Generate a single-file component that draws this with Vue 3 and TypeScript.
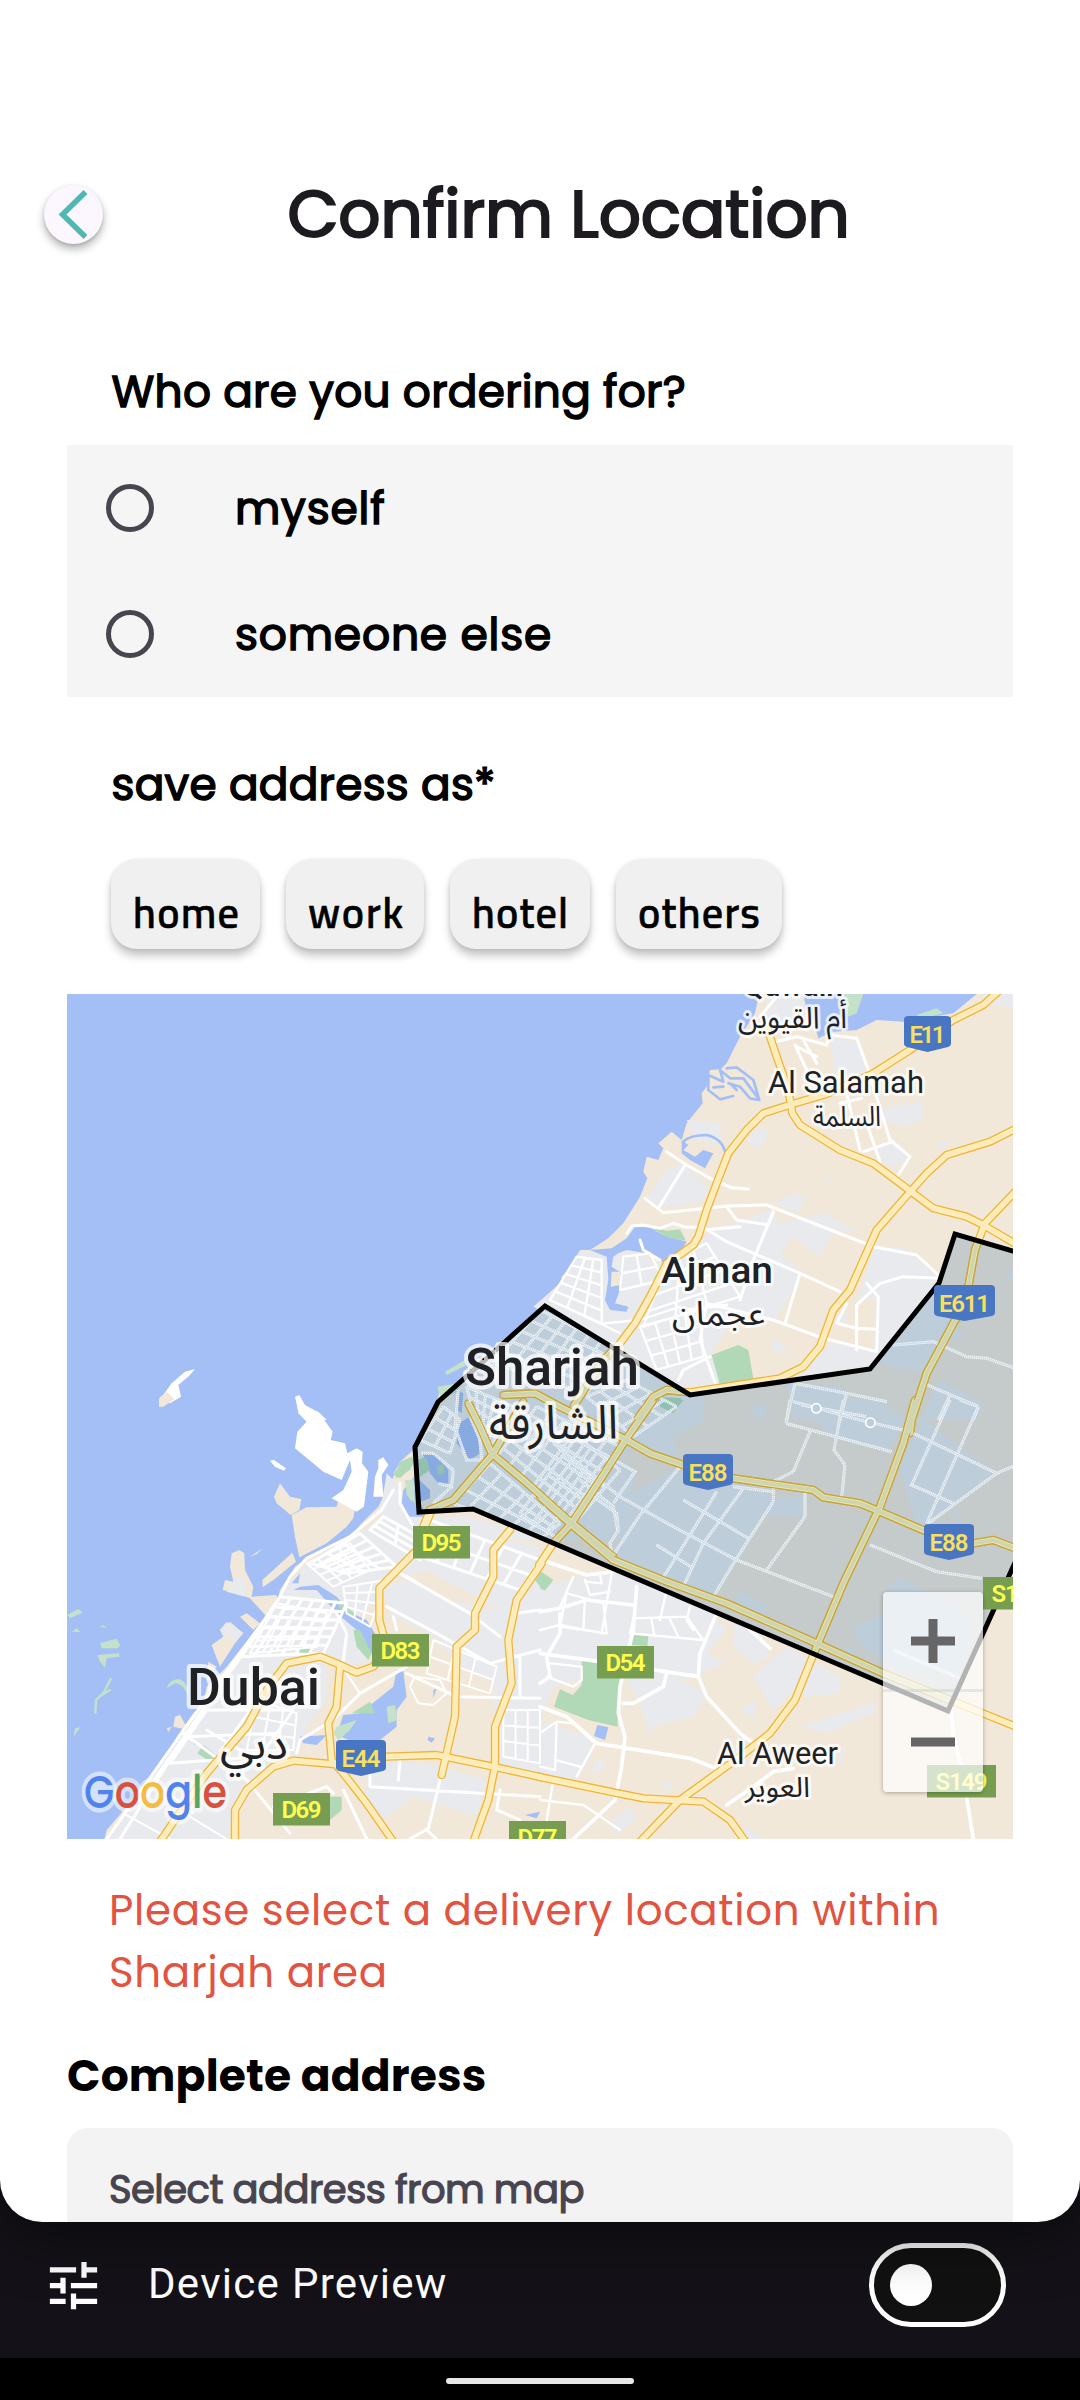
<script setup lang="ts">
import { ref } from 'vue'

type Point = [number, number]

const recipients = ['myself', 'someone else']
const recipient = ref('')
const tags = [
  { name: 'home', width: 149, text: 106 },
  { name: 'work', width: 138, text: 95 },
  { name: 'hotel', width: 140, text: 96 },
  { name: 'others', width: 166, text: 122 },
]
const previewOn = ref(false)

/* Street mesh between four corners: n lines one way, m lines the other. */
function mesh(a: Point, b: Point, c: Point, d: Point, n: number, m: number): string {
  const mix = (p: Point, q: Point, t: number): Point => [p[0] + (q[0] - p[0]) * t, p[1] + (q[1] - p[1]) * t]
  const seg = (p: Point, q: Point) => `M${p[0].toFixed(1)},${p[1].toFixed(1)}L${q[0].toFixed(1)},${q[1].toFixed(1)}`
  let out = ''
  for (let i = 0; i <= n; i++) out += seg(mix(a, b, i / n), mix(d, c, i / n))
  for (let j = 0; j <= m; j++) out += seg(mix(a, d, j / m), mix(b, c, j / m))
  return out
}

/* Map tiles, each at three units per pixel. */
const NW = 'translate(60 990) scale(.33333)'
const NE = 'translate(540 990) scale(.33333)'
const MID = 'translate(380 1240) scale(.33333)'
const SW = 'translate(60 1400) scale(.33333)'
const SE = 'translate(540 1400) scale(.33333)'

interface Shape { at: string; fill: string; d: string }
const sand = '#f1e8d9'
const urban = '#e8eaed'
const water = '#a4bff5'
const park = '#b1d9b8'
const pale = '#c4e2c9'

const shapes: Shape[] = [
  { at: NE, fill: sand, d: 'M660,0L645,70 600,140 560,220 542,238 510,240 500,290 485,310 488,340 440,400 425,450 395,425 355,460 370,475 355,510 320,500 310,545 322,565 300,620 250,700 205,745 150,780 125,780 100,825 65,860 65,880 20,940 -60,1010 -60,1300 1440,1300 1440,0Z' },
  { at: MID, fill: sand, d: 'M500,190L450,240 380,290 330,330 270,375 250,400 240,430 180,440 175,470 165,510 110,610 95,650 60,670 40,700 70,740 0,790 0,910 1030,910 1030,160 520,160Z' },
  { at: SW, fill: sand, d: 'M1440,0L1180,0 1060,150 1020,185 1003,225 985,260 955,320 905,370 860,420 790,455 740,475 705,500 660,570 650,610 615,655 580,700 540,750 500,800 440,860 430,910 400,940 350,1010 330,1060 290,1100 240,1170 200,1220 140,1290 130,1330 1450,1330 1450,0Z' },
  { at: SE, fill: sand, d: 'M-5,-5H1440V1330H-5Z' },
  { at: SW, fill: sand, d: 'M660,250L690,290 724,297 718,330 692,345 650,310 642,290ZM695,345L740,322 830,320 835,302 884,330 880,355 860,380 800,430 718,472 705,410ZM607,540L697,458 708,485 640,540 608,562ZM515,460L538,450 553,460 555,510 580,560 575,590 650,585 660,650 620,650 570,595 530,580 488,570 495,540 520,545 510,500ZM480,690L510,665 550,700 525,730 480,800 455,735 490,710ZM540,650L560,640 600,670 580,690ZM570,470L608,445 590,462ZM345,950L360,945 385,990 340,980ZM320,985L335,980 325,995ZM445,785L470,800 440,850Z' },
  { at: NE, fill: urban, d: 'M690,0L780,12 800,60 760,110 700,110 660,110ZM1320,12L1440,12 1440,55 1365,45ZM440,390L540,400 545,460 470,455ZM655,415L690,420 655,480 620,450ZM380,540L430,520 510,600 480,640 355,650 320,620ZM1040,350L1150,335 1150,390 1080,410 1030,390ZM870,140L960,160 975,250 890,280ZM1000,470L1080,460 1110,500 1060,530 1010,510ZM705,640L760,608 800,625 770,670ZM850,555L885,580 850,570ZM1190,460L1230,450 1205,480ZM120,780L220,800 270,780 360,820 470,760 520,720 690,660 720,700 850,670 960,730 890,720 860,760 840,800 760,740 720,790 790,850 740,930 700,1000 600,960 560,1020 510,1090 540,1180 430,1190 250,1090 -20,950 60,880ZM1000,780L1090,770 1190,860 1180,900 1070,1030 990,1130 760,1165 830,1100 870,1060 1000,1080 1010,920 950,940ZM690,1040L750,1080 700,1090ZM870,980L930,970 900,1010Z' },
  { at: MID, fill: urban, d: 'M500,190L700,300 940,460 860,500 900,550 880,600 900,650 760,620 720,660 770,710 690,900 500,900 290,800 150,790 110,690 110,610 190,490 300,370ZM20,700L70,750 60,800 100,830 260,830 500,900 0,900 0,820Z' },
  { at: SW, fill: urban, d: 'M980,240L1020,250 1025,290 1080,370 1440,440 1440,1130 1310,1100 1300,840 1200,800 1120,710 1000,650 960,560 1050,540 1230,640 1300,690 1320,630 1100,510 1020,530 930,620 880,660 930,780 860,800 790,750 800,660 800,900 740,980 720,1050 640,1080 580,1180 520,1240 500,1317 140,1317 400,950 500,830 620,650 670,570 730,500 900,400 970,350ZM530,530L558,535 555,590 500,575ZM500,665L550,700 515,725 480,690ZM920,1080L1100,1090 1280,1140 1250,1250 1100,1200 920,1170ZM880,1180L1010,1150 1050,1200 950,1270ZM1180,600L1380,650 1400,800 1250,720Z' },
  { at: SE, fill: urban, d: 'M-5,560L120,530 240,510 500,630 560,690 500,760 560,790 480,820 420,840 500,880 460,950 340,980 330,1010 300,910 240,800 40,860 0,960 140,1010 160,1060 110,1140 0,1120ZM580,670L660,700 690,770 640,790 580,740ZM640,830L740,740 900,830 900,880 800,890 770,860 700,930ZM600,930L650,900 640,960ZM780,980L1010,905 1000,940 860,1000ZM150,1110L180,1075 200,1100 170,1120ZM220,1260L270,1220 290,1260 220,1310ZM620,1280L670,1317 610,1317ZM365,1150L395,1145 390,1180ZM900,1040L920,1040 890,1110Z' },
  { at: SE, fill: urban, d: 'M300,-10L490,-10 490,60 400,110 300,90ZM640,20L680,15 670,55 635,45ZM400,210L560,230 700,290 620,440 520,590 220,480 240,300ZM620,340L720,290 790,290 790,350ZM760,0L1010,0 1100,60 1040,150 880,110ZM1150,60L1370,220 1250,310 1130,380 1080,200ZM1060,540L1120,550 1090,600ZM590,570L680,620 670,650 600,640ZM940,680L1040,640 1040,560 1080,530 1240,620 1300,660 1260,830 1060,800 950,720ZM1240,330L1270,340 1240,360ZM910,750L950,740 930,790Z' },
  { at: NE, fill: urban, d: 'M1060,1040L1170,860 1240,1000 1170,1150 1060,1130 1000,1110ZM1240,1010L1275,1040 1240,1050ZM740,1180L900,1190 1000,1290 760,1290ZM1390,860L1440,820 1440,870ZM1200,1170L1330,1240 1310,1290 1140,1290Z' },
  { at: NE, fill: water, d: 'M790,12L1310,12 1240,70 1090,95 1010,90 950,120 880,125 835,145 820,90 800,60ZM425,450L445,465 430,480 465,500 490,480 520,490 495,535 450,510 425,490ZM150,780L215,775 260,745 285,710 330,712 370,735 440,755 420,790 375,820 320,790 260,780 235,790 220,800 215,830 245,850 240,900 225,940 265,950 260,965 210,960 195,930 205,870 200,800Z' },
  { at: NE, fill: sand, d: 'M215,845L240,845 242,885 212,890Z' },
  { at: NE, fill: pale, d: 'M895,0L970,12 950,70 925,80 910,30ZM1130,75L1190,55 1210,70 1150,85Z' },
  { at: NE, fill: park, d: 'M335,712L380,722 420,718 438,752 380,742ZM515,1095L595,1065 625,1080 640,1165 540,1185ZM350,1220L425,1225 400,1270 360,1250Z' },
  { at: MID, fill: water, d: 'M235,550L270,530 290,570 300,640 270,660 230,610ZM125,640L170,645 205,690 205,730 180,735 150,700 140,660ZM118,720L150,750 150,775 120,785ZM232,450L250,460 245,520 232,510ZM70,750L110,700 112,820 85,830 65,790Z' },
  { at: MID, fill: park, d: 'M40,700L95,650 105,660 90,690 50,715ZM115,660L135,650 150,690 120,710ZM170,680L190,670 195,700 175,705Z' },
  { at: MID, fill: pale, d: 'M195,395L255,360 260,375 200,405ZM172,440L240,430 230,460 180,470ZM75,720L100,720 112,780 100,795 80,760Z' },
  { at: SW, fill: '#fff', d: 'M710,0L725,0 740,30 775,35 818,95 812,120 855,130 862,160 890,145 908,155 906,190 925,215 912,320 890,335 815,295 850,270 875,215 870,180 845,240 790,215 705,145 712,95 740,65 715,40ZM630,182L642,180 678,205 672,212 645,200ZM955,180L970,172 985,195 965,225 970,290 940,290 945,230 955,205Z' },
  { at: NW, fill: '#fff', d: 'M310,1215L335,1180 375,1145 405,1137 388,1157 355,1185 363,1220 330,1240ZM705,1220L718,1215 735,1245 780,1270 800,1290 740,1290 735,1270 715,1265Z' },
  { at: NW, fill: sand, d: 'M297,1225L320,1205 343,1228 310,1250 297,1250Z' },
  { at: SW, fill: water, d: 'M720,560L775,555 830,590 875,640 920,660 945,700 940,760 920,760 890,690 830,640 770,570 700,570ZM695,550L720,520 715,550ZM1010,810L1030,815 1040,890 1010,930 1010,980 960,1020 880,1025 830,1005 850,945 900,940 950,900 1000,860ZM720,1010L800,1005 770,1035 730,1030ZM1105,1010L1125,1015 1115,1028 1103,1020ZM1395,1245L1440,1235 1430,1255ZM1120,870L1130,865 1120,895ZM385,1005L410,1025 405,1035ZM1050,350L1060,260 1100,350Z' },
  { at: SW, fill: park, d: 'M880,690L900,690 935,760 925,780 890,740ZM720,740L760,750 730,785 718,760ZM815,590L885,640 880,655 840,625ZM430,1035L480,1075 450,1085 412,1060ZM810,1190L845,1190 845,1230 810,1260ZM1425,540L1440,520 1440,560ZM875,940L930,905 945,940ZM1005,225L1020,185 1055,170 1040,215 1020,235Z' },
  { at: SW, fill: pale, d: 'M820,1000L830,980 890,960 870,990 835,1020ZM980,920L1005,915 1012,960 985,970ZM22,645L55,627 68,638 30,654ZM35,695L50,685 62,697ZM118,680L130,676 142,684ZM120,730L170,716 180,735 175,745 125,745ZM112,765L178,760 178,770 140,775 135,803 120,785ZM40,1010L45,985 62,982ZM320,865Q330,835 360,838Q385,850 385,890Q370,850 345,850ZM1040,250L1060,235 1065,310 1040,285Z' },
  { at: SE, fill: park, d: 'M125,780L175,785 240,830 232,980 145,960 42,920 60,868 98,885 125,855ZM278,700L325,708 322,738 275,735ZM0,512L40,540 15,572 0,565ZM350,0L430,0 400,38Z' },
  { at: SE, fill: water, d: 'M172,975L205,982 195,1020 162,1008Z' },
]

/* Plain white streets outside of the delivery zone. */
const streets = [
  { at: NE, w: 9, d: 'M705,155L770,140 860,165 870,135 950,145 985,240 1050,450 1110,500 1075,555M765,165L800,240M790,150L830,220M770,170L790,180 830,200M710,20L660,80M920,310L960,480M980,400L1020,515M970,485L1060,455M900,340L965,325M380,485L440,525 520,570 575,593 625,597M432,530L355,655M315,625L370,668 560,648 680,645 1000,770 1130,795 1200,860M260,730L275,708 310,705 360,715 400,700 440,712 490,712 560,755 780,850 900,905M560,650L590,690 685,705 700,665 640,810 600,930M300,750L310,780 360,810M780,850L735,1000M490,720L600,710M500,940L700,990 850,1045 1010,1085 1015,920 980,880M1200,865L1090,860 1020,880 950,945 950,1080M890,1000L950,1015 1010,1018M890,1000L920,940M500,940L480,1050 530,1190M430,960L560,945M415,1170L430,1140 510,1100' },
  { at: NE, w: 7, d: mesh([110, 800], [185, 810], [185, 1000], [30, 930], 3, 5) + mesh([250, 800], [330, 790], [370, 870], [240, 900], 2, 2) + mesh([380, 820], [500, 760], [600, 920], [310, 1010], 3, 4) + mesh([300, 1010], [480, 960], [490, 1100], [350, 1140], 4, 3) + 'M30,930L180,1000 240,1030M190,1000L300,990 420,950' },
  { at: SW, w: 9, d: mesh([900, 400], [1010, 500], [860, 520], [750, 490], 5, 3) + mesh([660, 590], [860, 610], [790, 760], [540, 770], 6, 6) + mesh([1110, 360], [1440, 480], [1380, 570], [1080, 470], 6, 2) + mesh([440, 930], [700, 930], [600, 1070], [330, 1090], 2, 2) + mesh([970, 350], [1060, 400], [1080, 480], [930, 390], 2, 3) + 'M1000,270L965,330 870,410 740,475 690,530 660,590 620,650 510,800 400,950 140,1317M1020,250L1020,310 1060,380M530,780L380,1000 180,1317M600,690L500,830 240,1200M980,620L1130,700 1290,790 1440,750M1040,820L1190,890 1440,895M1040,800L900,880 820,960 720,1020 710,1060M1060,540L1020,520 1230,640 1320,710M830,640L860,700 850,780M370,1000L560,1140 690,1300M930,1110L930,1160 1440,1190M820,1180L800,1160 640,1220M1020,1080L1015,1140M1145,1120L1105,1285 1050,1317M850,1170L920,1317M1100,1290L1130,1317M1320,1170L1310,1230 1380,1260M1440,630L1370,640M1000,650L1010,690M1380,770L1380,890M440,990L540,1050' },
  { at: SW, w: 6, d: mesh([740, 490], [870, 430], [930, 510], [820, 560], 4, 4) + mesh([850, 560], [980, 540], [930, 680], [860, 640], 3, 4) + mesh([650, 610], [800, 640], [770, 740], [570, 760], 5, 4) + mesh([1120, 720], [1310, 800], [1290, 880], [1100, 820], 3, 2) + mesh([590, 900], [710, 940], [700, 1050], [560, 1050], 3, 3) + mesh([1330, 930], [1440, 930], [1440, 1090], [1330, 1070], 3, 3) + 'M1065,830L1050,860 1075,910 1120,915 1160,880 1140,840ZM860,820L900,880M190,1240L330,1317M340,1220L500,1317M290,1150L400,1240' },
  { at: SE, w: 11, d: 'M0,635L60,625 140,600 280,615M530,640L480,760 475,830 500,890 600,1000 640,1030M290,560L280,690 240,860 235,940 255,1010 245,1100 225,1200 100,1317M0,760L180,785 475,830M0,920L80,950 170,1030 450,1075 540,1110M60,640L60,700 20,770 30,830 0,850M1230,910L1240,1000 1270,1130 1300,1317M560,1215L640,1160 700,1115 760,1105M620,680L690,745M20,485L140,525 220,515M380,820L370,860 280,910 250,910' },
  { at: SE, w: 7, d: mesh([60, 680], [200, 700], [190, 610], [80, 580], 2, 1) + mesh([280, 655], [440, 650], [490, 720], [270, 700], 3, 1) + 'M100,530L60,620M135,540L150,585 210,575M180,520L185,550 135,545M215,520L185,700M380,570L360,660M450,620L440,660 460,690M0,690L60,675 190,700M30,790L125,800 125,840 100,860 20,830M0,1000L50,965 100,970 165,1030 110,1130M50,970L45,1110 0,1100M0,1200L130,1215 240,1290M40,1140L20,1260M45,1080L120,1100' },
]

/* Streets seen through the zone's tint. */
const zoneStreets = [
  { at: NE, d: 'M1060,1065L1180,1055 1280,1100 1340,1105 1440,1140M740,1290L765,1180 920,1210 1040,1235M920,1210L900,1290M785,1245L980,1280M1150,1180L1315,1250 1300,1290M1230,1215L1195,1290' },
  { at: SE, d: 'M750,0L738,70 1055,155M760,5L960,60 1110,95 1370,220 1165,370M910,0L882,150 915,195 905,290M810,95L760,215 700,245M1230,0L1115,255 1240,310M1260,0L1315,20 1160,370M1440,190L1370,220M990,435L1190,515 1325,535M795,280L795,350 680,510M1060,750L1260,835' },
  { at: SE, d: 'M420,200L300,345 210,480M530,275L450,405 365,540M610,265L490,430 430,560M700,245L700,305 590,475 520,590M40,130L240,290 400,380 590,480 880,590M170,150L285,215 220,310M430,300L490,335 625,415M350,435L460,505M580,260L700,275M160,290L230,340 235,390 210,430 215,460' },
  { at: SE, d: mesh([110, 110], [240, 210], [60, 420], [-60, 340], 3, 4) },
  { at: MID, d: mesh([480, 210], [700, 320], [620, 460], [340, 370], 6, 5) + mesh([260, 440], [400, 500], [330, 620], [290, 560], 5, 4) + mesh([470, 500], [720, 620], [560, 840], [350, 650], 6, 6) + mesh([740, 420], [890, 500], [760, 590], [620, 470], 4, 3) + mesh([330, 670], [540, 850], [490, 890], [220, 790], 6, 3) + mesh([190, 500], [240, 540], [210, 640], [120, 600], 2, 3) + 'M235,450L225,560 260,660 305,660 300,600 270,530M125,640L160,640 220,690 215,740 175,730M215,740L160,790M600,720L700,800 715,880' },
]

interface Road { at: string; d: string }
const roads: Road[] = [
  { at: NE, d: 'M1380,0L1330,45 1240,90 1110,180 1000,250 860,312 755,343 670,370 620,420 565,490 530,580 500,660 475,740 460,765 425,790 380,820 330,920 285,1000 240,1060 190,1110 100,1250' },
  { at: NE, d: 'M680,110L710,200 745,300 757,370 780,405 900,480 1000,520 1100,595 1180,655 1280,680 1330,705 1440,770' },
  { at: NE, d: 'M1440,410L1350,455 1220,495 1160,550 1080,640 1010,720 970,810 930,900 880,960 840,1070 790,1130 720,1165 450,1207 380,1200 340,1220 290,1290' },
  { at: NE, d: 'M1440,590L1335,700 1305,780 1285,890 1265,960 1240,1000 1160,1150 1115,1290 1110,1330' },
  { at: SE, d: 'M-110,-15L-15,-20 60,20 260,120 330,160 430,195 580,235 820,270 850,292 960,310 1020,335 1160,395 1300,430 1360,420 1440,450' },
  { at: MID, d: 'M265,490L300,560 335,640 430,720 565,840 700,950' },
  { at: SE, d: 'M0,290L90,370 220,480 380,545 560,610 830,730 1030,820 1230,900 1440,985' },
  { at: MID, d: 'M430,485L340,640 220,780 150,810 130,860' },
  { at: SE, d: 'M340,0L260,115 180,240 95,370 40,430 -3,495' },
  { at: SE, d: 'M1125,0L1090,130 1020,320 910,550 830,740 765,900 690,1000 600,1070 420,1200 300,1325' },
  { at: SE, d: 'M-5,1130L225,1178 310,1195 490,1205 570,1260 620,1330' },
  { at: SW, d: 'M1115,330L1095,380 1080,440 958,565 958,660 980,740 940,800 890,818 830,790 780,770 680,790 620,870 560,980 440,1120 300,1325' },
  { at: SW, d: 'M840,800L830,920 805,970 815,1080 850,1120 920,1210 1000,1325' },
  { at: SW, d: 'M525,1325L525,1230 560,1170 640,1100 700,1082 850,1095 980,1070 1130,1065 1300,1100 1445,1132' },
  { at: SW, d: 'M1445,490L1370,600 1345,720 1355,850 1305,980 1305,1100 1285,1200 1240,1325' },
  { at: SW, d: 'M1350,390L1300,450 1300,530 1245,640 1245,690 1190,740 1185,950 1145,1125' },
]

const zone = '1013,1251 955,1234 939,1283 870,1369 690,1395 545,1306 438,1402 415,1447 419,1512 473,1509 948,1711 1013,1567'

const places = [
  { name: 'Quwain', x: 743, y: 996, w: 100, size: 31, weight: 500 },
  { name: 'أم القيوين', x: 738, y: 1028, w: 109, size: 30, weight: 400 },
  { name: 'Al Salamah', x: 768, y: 1093, w: 156, size: 31, weight: 400 },
  { name: 'السلمة', x: 813, y: 1126, w: 68, size: 28, weight: 400 },
  { name: 'Ajman', x: 661, y: 1283, w: 112, size: 37, weight: 500 },
  { name: 'عجمان', x: 672, y: 1325, w: 93, size: 33, weight: 400 },
  { name: 'Sharjah', x: 465, y: 1385, w: 174, size: 52, weight: 500 },
  { name: 'الشارقة', x: 489, y: 1439, w: 129, size: 47, weight: 400 },
  { name: 'Dubai', x: 187, y: 1705, w: 133, size: 52, weight: 500 },
  { name: 'دبي', x: 220, y: 1759, w: 68, size: 43, weight: 400 },
  { name: 'Al Aweer', x: 717, y: 1764, w: 121, size: 31, weight: 400 },
  { name: 'العوير', x: 745, y: 1797, w: 65, size: 28, weight: 400 },
]

const blueShields = [
  { name: 'E11', x: 904, y: 1016, w: 47, text: 36 },
  { name: 'E611', x: 934, y: 1285, w: 61, text: 51 },
  { name: 'E88', x: 683, y: 1454, w: 50, text: 39 },
  { name: 'E88', x: 924, y: 1524, w: 50, text: 39 },
  { name: 'E44', x: 336, y: 1740, w: 50, text: 39 },
]
const greenShields = [
  { name: 'D95', x: 413, y: 1526, w: 57, text: 40 },
  { name: 'D83', x: 372, y: 1634, w: 57, text: 40 },
  { name: 'D54', x: 597, y: 1646, w: 57, text: 40 },
  { name: 'D69', x: 273, y: 1793, w: 57, text: 40 },
  { name: 'D77', x: 509, y: 1821, w: 57, text: 40 },
  { name: 'S149', x: 927, y: 1765, w: 69, text: 52 },
  { name: 'S116', x: 983, y: 1577, w: 69, text: 52 },
]
const shieldPath = (x: number, y: number, w: number) =>
  `M${x + 4},${y}H${x + w - 4}Q${x + w},${y} ${x + w},${y + 4}V${y + 28}Q${x + w},${y + 30} ${x + w - 3},${y + 31}L${x + w / 2},${y + 36}L${x + 3},${y + 31}Q${x},${y + 30} ${x},${y + 28}V${y + 4}Q${x},${y} ${x + 4},${y}Z`
</script>

<template>
  <div class="device">
    <main class="sheet">
      <header class="top">
        <button class="back" aria-label="Back">
          <svg width="59" height="59" viewBox="0 0 59 59"><path d="M41.500 7 18.500 29.500 41.500 52" fill="none" stroke="#50b8b3" stroke-width="5.5" /></svg>
        </button>
        <h1>Confirm Location</h1>
      </header>

      <h2 class="question">Who are you ordering for?</h2>
      <div class="radios">
        <label v-for="r in recipients" :key="r" @click="recipient = r">
          <span class="ring" :class="{ on: recipient === r }"></span>
          <span :class="r === 'myself' ? 'me' : 'other'">{{ r }}</span>
        </label>
      </div>

      <h2 class="save">save address as*</h2>
      <div class="tags">
        <button v-for="t in tags" :key="t.name" :style="{ width: t.width + 'px' }">
          <svg :width="t.text" height="60" overflow="visible"><text x="0" y="48.5" :textLength="t.text">{{ t.name }}</text></svg>
        </button>
      </div>

      <div class="map">
        <svg width="946" height="845" viewBox="67 994 946 845">
          <path v-for="(s, i) in shapes" :key="'s' + i" :transform="s.at" :fill="s.fill" :d="s.d" />
          <g fill="none" stroke-linejoin="round" stroke-linecap="round">
            <path :transform="SW" d="M152,838L130,880 108,900 106,938M150,870L125,885" :stroke="pale" stroke-width="7" />
            <path :transform="NE" d="M430,455Q450,435 500,435Q545,445 555,485M540,240L570,265 610,265 655,325M560,235L590,232 640,270 658,330 630,325 600,290 565,280M540,240L550,275 505,255 505,300 540,328 580,318M520,292L550,290M570,280L590,300" :stroke="water" stroke-width="8" />
            <path v-for="(s, i) in streets" :key="'w' + i" :transform="s.at" :d="s.d" stroke="#fff" :stroke-width="s.w" />
            <path v-for="(r, i) in roads" :key="'o' + i" :transform="r.at" :d="r.d" stroke="#efb440" stroke-width="25" />
            <path v-for="(r, i) in roads" :key="'i' + i" :transform="r.at" :d="r.d" stroke="#fff6a8" stroke-width="17" />
            <path v-for="(r, i) in roads" :key="'c' + i" :transform="r.at" :d="r.d" stroke="#fdeabf" stroke-width="12" />
          </g>
          <clipPath id="zone-clip"><polygon :points="zone" /></clipPath>
          <polygon :points="zone" fill="rgba(20,90,145,.2)" />
          <g clip-path="url(#zone-clip)" fill="none">
            <path v-for="(s, i) in zoneStreets" :key="'z' + i" :transform="s.at" :d="s.d" stroke="#fff" stroke-width="9" stroke-dasharray="4 2" />
            <path v-for="(s, i) in zoneStreets" :key="'y' + i" :transform="s.at" :d="s.d" stroke="#d1dfe9" stroke-width="4" />
            <g :transform="SE" stroke="#fff" stroke-width="5"><circle cx="829" cy="25" r="14" fill="#becdda" /><circle cx="991" cy="68" r="14" fill="#becdda" /></g>
            <path v-for="(r, i) in roads" :key="'zo' + i" :transform="r.at" :d="r.d" stroke="#c6a53f" stroke-width="25" />
            <path v-for="(r, i) in roads" :key="'zi' + i" :transform="r.at" :d="r.d" stroke="#eee9a0" stroke-width="17" />
            <path v-for="(r, i) in roads" :key="'zc' + i" :transform="r.at" :d="r.d" stroke="#cfd4b2" stroke-width="12" />
          </g>
          <polygon :points="zone + ' 1030,1530 1030,1256'" fill="none" stroke="#000" stroke-width="5" />

          <g v-for="(s, i) in blueShields" :key="'b' + i">
            <path :d="shieldPath(s.x, s.y, s.w)" fill="#4876c2" />
            <text class="shield" :x="s.x + s.w / 2" :y="s.y + 27" :textLength="s.text" fill="#f7df62">{{ s.name }}</text>
          </g>
          <g v-for="(s, i) in greenShields" :key="'g' + i">
            <rect :x="s.x" :y="s.y" :width="s.w" height="32.5" fill="#779e50" />
            <text class="shield" :x="s.x + s.w / 2" :y="s.y + 25" :textLength="s.text" fill="#ffff52">{{ s.name }}</text>
          </g>
          <text
            v-for="p in places" :key="p.name" class="place" :x="p.x + p.w / 2" :y="p.y" :textLength="p.w"
            lengthAdjust="spacingAndGlyphs" :font-size="p.size" :font-weight="p.weight" :stroke-width="p.size > 40 ? 8 : 6"
          >{{ p.name }}</text>
          <text class="google" x="84" y="1808" textLength="143" lengthAdjust="spacingAndGlyphs"><tspan fill="#5083ed">G</tspan><tspan fill="#d75040">o</tspan><tspan fill="#f2bd42">o</tspan><tspan fill="#5083ed">g</tspan><tspan fill="#58a55c">l</tspan><tspan fill="#d75040">e</tspan></text>
        </svg>
        <div class="zoom">
          <button aria-label="Zoom in"><svg width="44" height="44" viewBox="0 0 44 44"><path d="M0 22H44M22 0V44" stroke="#666" stroke-width="9" /></svg></button>
          <button aria-label="Zoom out"><svg width="44" height="44" viewBox="0 0 44 44"><path d="M0 22H44" stroke="#666" stroke-width="9" /></svg></button>
        </div>
      </div>

      <p class="error">Please select a delivery location within<br />Sharjah area</p>
      <h2 class="complete">Complete address</h2>
      <div class="field"><span>Select address from map</span></div>
    </main>

    <footer class="preview">
      <svg class="tune" width="63" height="63" viewBox="0 0 24 24"><path fill="#fff" d="M3 17v2h6v-2H3zM3 5v2h10V5H3zm10 16v-2h8v-2h-8v-2h-2v6h2zM7 9v2H3v2h4v2h2V9H7zm14 4v-2H11v2h10zm-6-4h2V7h4V5h-4V3h-2v6z" /></svg>
      <span class="name">Device Preview</span>
      <button class="switch" :class="{ on: previewOn }" aria-label="Device Preview" @click="previewOn = !previewOn"><i></i></button>
    </footer>
    <div class="system"><span></span></div>
  </div>
</template>

<style>
body { margin: 0; background: #000; }
</style>

<style scoped>
.device { width: 1080px; height: 2400px; display: flex; flex-direction: column; overflow: hidden; background: #141218; font-family: Poppins, Inter, sans-serif; color: #000; }
button { border: 0; padding: 0; margin: 0; }
h1, h2, p { margin: 0; white-space: nowrap; }
h2 { font-size: 43.8px; font-weight: 400; line-height: 60px; letter-spacing: .3px; -webkit-text-stroke: 1.5px #000; }
.sheet { position: relative; z-index: 1; box-sizing: border-box; height: 2221.500px; flex: none; overflow: hidden; background: #fff; border-radius: 0 0 42px 42px; box-shadow: 0 10px 60px rgba(0, 0, 0, .55); padding: 164px 67px 0; display: flex; flex-direction: column; align-items: stretch; }
.sheet > * { flex: none; }
.top { display: flex; align-items: center; height: 100px; margin-left: -23px; }
.back { width: 59px; height: 59px; border-radius: 50%; background: #fcf7ff; box-shadow: 0 5px 9px rgba(0, 0, 0, .3), 0 1px 3px rgba(0, 0, 0, .12); }
.back svg { display: block; }
h1 { margin: 0 0 0 184.5px; font-size: 66px; font-weight: 400; line-height: 100px; letter-spacing: -.1px; color: #1d1b20; -webkit-text-stroke: 2.2px #1d1b20; }
.question { margin: 98px 0 0 44.5px; }
.radios { margin-top: 23px; height: 252px; background: #f5f5f5; }
.radios label { height: 126px; display: flex; align-items: center; padding-left: 39px; gap: 81px; font-size: 44px; line-height: 60px; -webkit-text-stroke: 1.5px #000; }
.radios label span:last-child { padding-top: 1px; }
.ring { box-sizing: border-box; width: 48px; height: 48px; border: 5px solid #49454f; border-radius: 50%; }
.ring.on { background: radial-gradient(#49454f 45%, transparent 50%); }
.me { letter-spacing: .8px; }
.other { letter-spacing: .8px; }
.save { margin: 58px 0 0 44.5px; }
.tags { display: flex; gap: 26px; margin: 44px 0 0 44px; }
.tags button { height: 90px; padding-top: 20px; border-radius: 26px; background: #f0f0f0; box-shadow: 0 7px 9px rgba(0, 0, 0, .22), 0 1px 4px rgba(0, 0, 0, .1); display: flex; justify-content: center; }
.tags text { font: 600 42px Cairo, "Noto Sans", sans-serif; stroke: #000; stroke-width: .6px; }
.map { position: relative; height: 845px; margin-top: 45px; background: #a4bff5; overflow: hidden; }
.map > svg { display: block; }
.shield { font: 600 24px Roboto, sans-serif; text-anchor: middle; }
.place { font-family: Roboto, "Noto Sans Arabic", "DejaVu Sans", sans-serif; text-anchor: middle; fill: #202124; stroke: rgba(255, 255, 255, .72); stroke-linejoin: round; paint-order: stroke; }
.google { font: 500 46px Poppins, Lato, sans-serif; stroke: rgba(255, 255, 255, .55); stroke-width: 9px; stroke-linejoin: round; paint-order: stroke; }
.zoom { position: absolute; left: 816px; top: 598px; width: 100px; height: 200px; border-radius: 4px; background: rgba(255, 255, 255, .7); box-shadow: 0 1px 4px rgba(0, 0, 0, .3); }
.zoom button { box-sizing: border-box; width: 100px; height: 100px; background: none; display: flex; align-items: center; justify-content: center; }
.zoom button:first-child { border-bottom: 3px solid rgba(180, 190, 190, .3); }
.error { margin: 41px 0 0 42px; font-size: 42px; line-height: 61.5px; letter-spacing: .65px; color: #e15442; }
.complete { margin-top: 43px; font-size: 44px; font-weight: 700; letter-spacing: .15px; -webkit-text-stroke: 0; }
.field { box-sizing: border-box; margin-top: 22px; height: 150px; border-radius: 21px 21px 0 0; background: #f3f3f3; padding: 32px 0 0 42px; font-size: 38.5px; line-height: 60px; letter-spacing: -.55px; color: #49454f; -webkit-text-stroke: 1.2px #49454f; white-space: nowrap; }
.preview { flex: none; box-sizing: border-box; height: 136.500px; background: #141218; display: flex; align-items: center; padding: 0 74px 9px 42px; }
.name { margin: -2px 0 0 43px; flex: 1; font: 400 42px/60px Roboto, sans-serif; letter-spacing: 1.3px; color: #fff; }
.switch { box-sizing: border-box; width: 137px; height: 84px; border: 5.5px solid #fff; border-radius: 42px; background: #111; display: flex; align-items: center; padding-left: 16px; }
.switch i { width: 42px; height: 42px; border-radius: 50%; background: #fff; }
.switch.on { justify-content: flex-end; padding: 0 16px 0 0; }
.system { flex: 1; background: #000; display: flex; justify-content: center; padding-top: 20px; }
.system span { width: 188px; height: 6px; border-radius: 3px; background: #e7e7e7; }
</style>
